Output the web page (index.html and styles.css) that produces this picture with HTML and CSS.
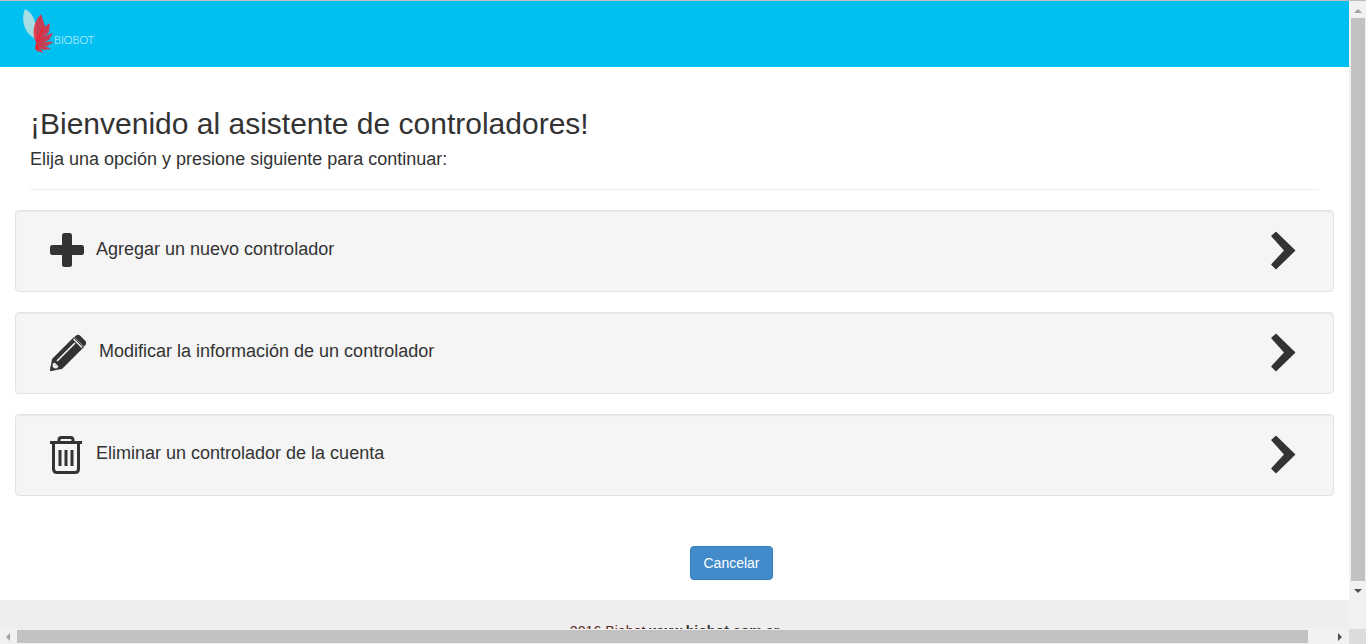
FILE: index.html
```html
<!DOCTYPE html>
<html>

<head>
    <title>Biobot</title>
    <link rel="stylesheet" href="styles.css">
</head>

<body>
    <div class="window">
        <div class="page">
            <div class="topbar">
                <div class="logo">
                    <svg width="34" height="46" viewBox="0 0 34 46">
                        <path d="M5 1 C12 4 18 14 16 31 C6 27 0 14 5 1 Z" fill="#a5dde3" />
                        <g fill="#f5202f" fill-opacity=".82">
                            <path d="M21 6 L25 18 L17 36 C11 27 13 14 21 6 Z" />
                            <path d="M30 15 L29 24 L16 37 C16 28 21 20 30 15 Z" />
                            <path d="M33 25 L29 32 L15 38 C19 31 25 27 33 25 Z" />
                            <path d="M34 34 L27 38 L15 38 C21 34 28 33 34 34 Z" />
                            <path d="M31 41 L24 42 L15 38 C21 37 27 38 31 41 Z" />
                            <path d="M23 45 L18 43 L15 37 C19 38 22 41 23 45 Z" />
                            <path d="M18 44 L15 41 L16 36 C18 38 19 40 18 44 Z" />
                        </g>
                    </svg>
                    <span class="logotext">BIOBOT</span>
                </div>
            </div>

            <div class="welcome">
                <h1>¡Bienvenido al asistente de controladores!</h1>
                <p>Elija una opción y presione siguiente para continuar:</p>
                <hr>
            </div>

            <div class="options">
                <div class="option">
                    <svg class="opticon plus" width="36" height="36" viewBox="0 0 36 36">
                        <rect x="1" y="13" width="34" height="10" rx="2.500" fill="#333" />
                        <rect x="13" y="1" width="10" height="34" rx="2.500" fill="#333" />
                    </svg>
                    <span class="optlabel">Agregar un nuevo controlador</span>
                    <svg class="chevron" width="28" height="40" viewBox="0 0 28 40">
                        <polygon points="3,5 7,1.500 25.500,19.500 7,37.500 3,33.500 16,19.500" fill="#333" stroke="#333" stroke-width="1.500" stroke-linejoin="round" />
                    </svg>
                </div>
                <div class="option">
                    <svg class="opticon pencil" width="38" height="38" viewBox="0 0 38 38">
                        <path d="M1 37 L3 25 L25 3 L35 13 L13 35 Z" fill="#333" />
                        <path d="M27 1.500 Q29 0 31 1.500 L36.500 7 Q38 9 36.500 11 L35 12.500 L25.500 3 Z" fill="#333" />
                        <path d="M8 27 L26 9 M5 29 L9 33" stroke="#f5f5f5" stroke-width="1.600" fill="none" />
                        <path d="M4 29 L9 34 L3 35 Z" fill="#f5f5f5" />
                        <path d="M24.500 5 L33 13.500" stroke="#f5f5f5" stroke-width="1.400" fill="none" />
                        <path d="M1 37 L2 31 L7 36 Z" fill="#333" />
                    </svg>
                    <span class="optlabel">Modificar la información de un controlador</span>
                    <svg class="chevron" width="28" height="40" viewBox="0 0 28 40">
                        <polygon points="3,5 7,1.500 25.500,19.500 7,37.500 3,33.500 16,19.500" fill="#333" stroke="#333" stroke-width="1.500" stroke-linejoin="round" />
                    </svg>
                </div>
                <div class="option">
                    <svg class="opticon trash" width="34" height="38" viewBox="0 0 34 38">
                        <path d="M1 6.500 H33" stroke="#333" stroke-width="3" fill="none" />
                        <path d="M10 6 V4 Q10 1.500 12.500 1.500 H21.500 Q24 1.500 24 4 V6" stroke="#333" stroke-width="3" fill="none" />
                        <path d="M4.500 7 V33 Q4.500 36.500 8 36.500 H26 Q29.500 36.500 29.500 33 V7" stroke="#333" stroke-width="3" fill="none" />
                        <path d="M11 14 V30 M17 14 V30 M23 14 V30" stroke="#333" stroke-width="3" fill="none" />
                    </svg>
                    <span class="optlabel">Eliminar un controlador de la cuenta</span>
                    <svg class="chevron" width="28" height="40" viewBox="0 0 28 40">
                        <polygon points="3,5 7,1.500 25.500,19.500 7,37.500 3,33.500 16,19.500" fill="#333" stroke="#333" stroke-width="1.500" stroke-linejoin="round" />
                    </svg>
                </div>
            </div>

            <div class="actions">
                <button class="btn">Cancelar</button>
            </div>

            <div class="footer">
                <span class="year">2016 Biobot</span> <strong>www.biobot.com.ar</strong>
            </div>
        </div>

        <!-- scrollbars -->
        <div class="vscroll">
            <span class="arrow up"></span>
            <div class="vthumb"></div>
            <span class="arrow down"></span>
        </div>
        <div class="hscroll">
            <span class="arrow left"></span>
            <div class="hthumb"></div>
            <span class="arrow right"></span>
        </div>
        <div class="corner"></div>
    </div>
</body>

</html>
```

FILE: styles.css
```css
html,
body {
    margin: 0;
    padding: 0;
    overflow: hidden;
    font-family: "Liberation Sans", Arial, sans-serif;
    color: #333;
}

.window {
    display: grid;
    grid-template-columns: 1349px 17px;
    grid-template-rows: 629px 15px;
    width: 1366px;
    height: 644px;
}

.page {
    overflow: hidden;
    background: #fff;
}

.topbar {
    height: 66px;
    background: #00c0f2;
    border-top: 1px solid #bdbdbd;
}

.logo {
    display: flex;
    align-items: flex-start;
    padding: 7px 0 0 20px;
}

.logotext {
    margin: 25px 0 0 0;
    font-family: Lato, sans-serif;
    font-size: 11px;
    font-weight: 300;
    color: #e2f7fd;
}

.welcome {
    padding: 39px 30px 0 30px;
}

.welcome h1 {
    margin: 0;
    font-size: 30px;
    font-weight: 400;
    line-height: 36px;
}

.welcome p {
    margin: 5px 0 0 0;
    font-size: 18px;
    line-height: 24px;
}

.welcome hr {
    margin: 18px 0 0 0;
    border: 0;
    border-top: 1px solid #eee;
}

.options {
    display: flex;
    flex-direction: column;
    gap: 20px;
    margin: 20px 15px 0 15px;
}

.option {
    display: flex;
    align-items: center;
    box-sizing: border-box;
    height: 82px;
    padding: 0 36px 0 33px;
    background: #f5f5f5;
    border: 1px solid #e3e3e3;
    border-radius: 4px;
    box-shadow: inset 0 1px 1px rgba(0, 0, 0, .05);
}

.opticon {
    flex: none;
    margin-right: 12px;
}

.opticon.plus {
    margin-top: -2px;
    margin-right: 11px;
}

.opticon.trash {
    margin-top: -1px;
    margin-right: 13px;
}

.optlabel {
    flex: 1;
    margin-top: -3px;
    font-size: 18px;
}

.chevron {
    flex: none;
    margin-top: -1px;
}

.actions {
    margin-top: 50px;
    padding-left: 690px;
}

.btn {
    display: block;
    width: 83px;
    height: 34px;
    padding: 0;
    font-family: inherit;
    font-size: 14px;
    color: #fff;
    background: #428bca;
    border: 1px solid #357ebd;
    border-radius: 4px;
}

.footer {
    height: 60px;
    margin-top: 20px;
    padding-top: 21px;
    box-sizing: border-box;
    background: #eee;
    font-size: 14.150px;
    line-height: 20px;
    text-align: center;
}

.year {
    color: #5a2a1a;
}

.vscroll {
    display: flex;
    flex-direction: column;
    align-items: center;
    background: #f1f1f1;
    border-top: 1px solid #bdbdbd;
}

.vthumb {
    width: 14px;
    height: 563px;
    margin: 5px 0 8px 0;
    background: #c1c1c1;
}

.hscroll {
    display: flex;
    align-items: center;
    background: #f1f1f1;
}

.hthumb {
    width: 1291px;
    height: 13px;
    margin: 0 0 0 7px;
    background: #c1c1c1;
}

.corner {
    background: #dcdcdc;
}

.arrow {
    flex: none;
    width: 0;
    height: 0;
    border-style: solid;
    border-color: transparent;
}

.arrow.up {
    margin-top: 8px;
    border-width: 0 4px 4px 4px;
    border-bottom-color: #a3a3a3;
}

.arrow.down {
    border-width: 4px 4px 0 4px;
    border-top-color: #505050;
}

.arrow.left {
    margin-left: 6px;
    border-width: 4px 4px 4px 0;
    border-right-color: #a3a3a3;
}

.arrow.right {
    margin-left: 30px;
    border-width: 4px 0 4px 4px;
    border-left-color: #505050;
}
```
